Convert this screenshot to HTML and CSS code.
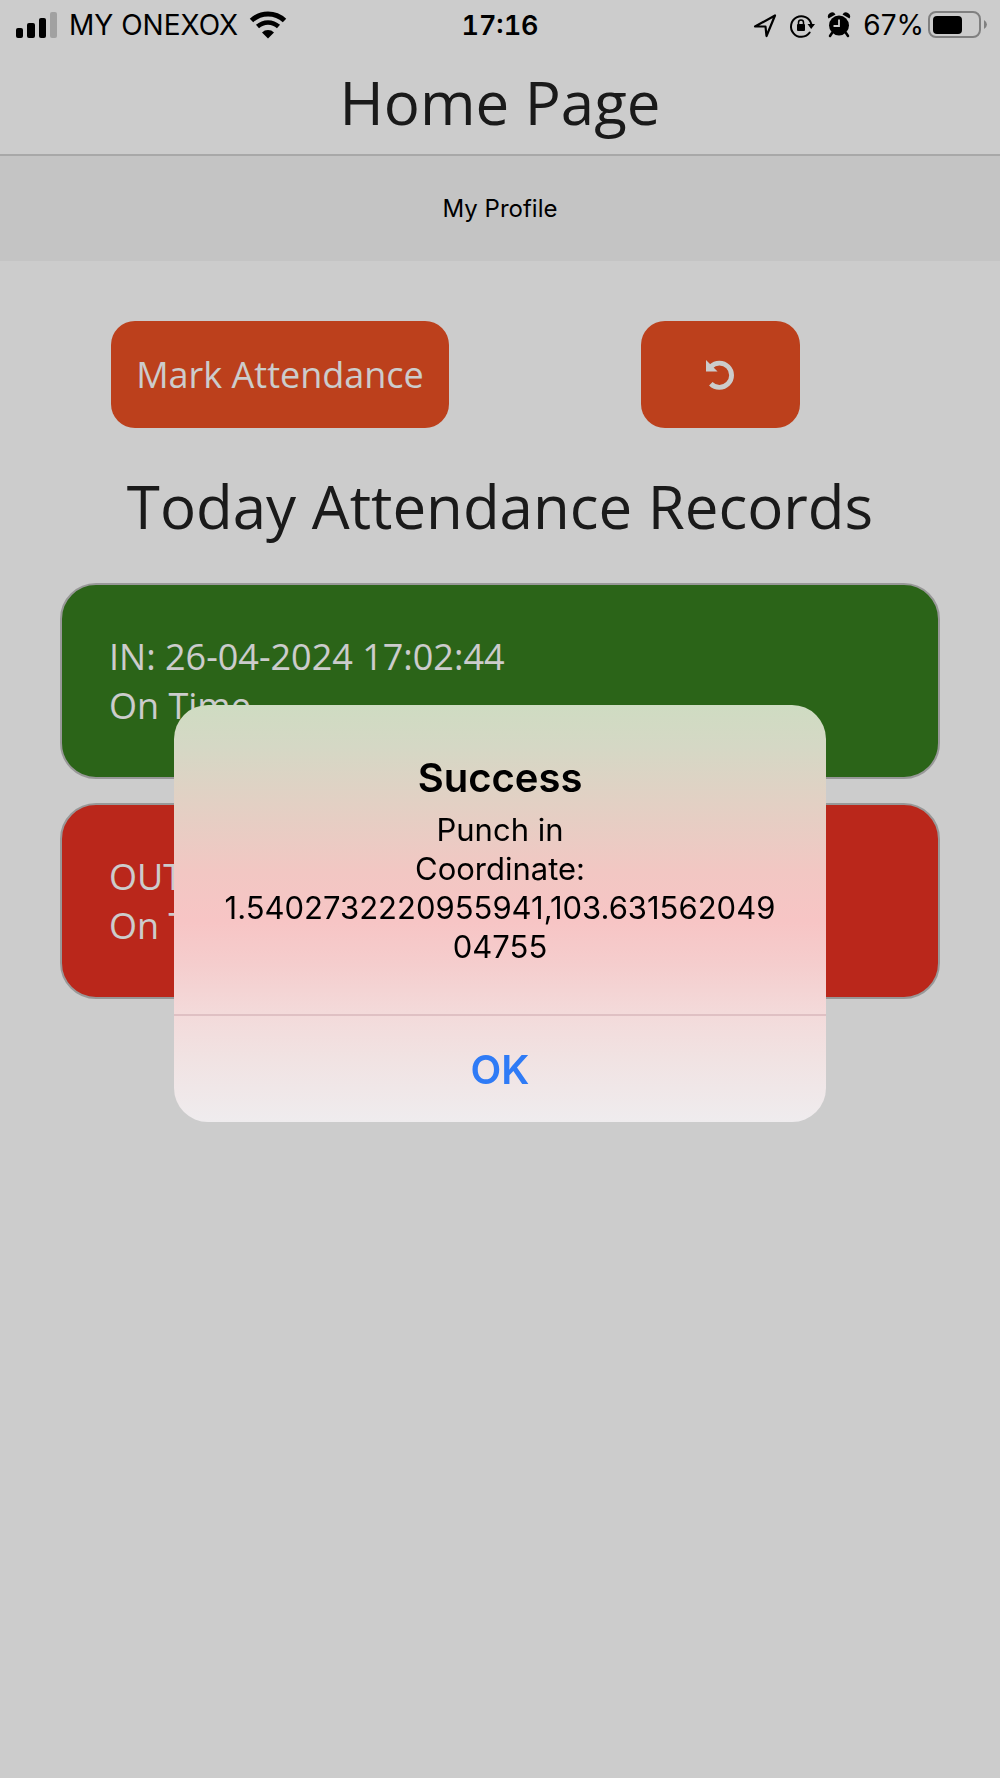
FILE: index.html
```
<!DOCTYPE html>
<html lang="en">

<head>
    <meta charset="UTF-8">
    <meta name="viewport" content="width=device-width, initial-scale=1.0">
    <title>Home Page</title>
    <link rel="stylesheet" href="styles.css">
</head>

<body>
    <div class="status-bar">
        <div class="status-left">
            <svg width="46" height="28" viewBox="-4 0 46 28">
                <rect x="0" y="17" width="7" height="10" rx="2" />
                <rect x="11" y="12" width="8" height="15" rx="2" />
                <rect x="23" y="7" width="7" height="20" rx="2" />
                <rect x="34" y="1" width="7" height="26" rx="2" fill="#cacaca" />
            </svg>
            <span class="carrier">MY ONEXOX</span>
            <svg width="38" height="28" viewBox="0 0 38 28">
                <path d="M2.5 9.5 A24 24 0 0 1 35.500 9.500" fill="none" stroke="#000" stroke-width="5" />
                <path d="M8.500 15.500 A15.500 15.500 0 0 1 29.500 15.500" fill="none" stroke="#000" stroke-width="4.500" />
                <path d="M13 21.500 A8.500 8.500 0 0 1 25 21.500 L19 27.500 Z" />
            </svg>
        </div>
        <span class="clock">17:16</span>
        <div class="status-right">
            <svg width="24" height="28" viewBox="0 0 24 28">
                <path d="M2 15.500 L22 4.500 L13.500 25 L12.500 15.500 Z" fill="none" stroke="#000" stroke-width="2.200" stroke-linejoin="round" />
            </svg>
            <svg width="26" height="28" viewBox="0 0 26 28">
                <path d="M20.700 21.500 A10.300 10.300 0 1 1 22.300 13" fill="none" stroke="#000" stroke-width="2" stroke-linecap="round" />
                <path d="M18.500 13 H26 L22.200 18 Z" />
                <rect x="8" y="13" width="8" height="7" rx="1" />
                <path d="M9.500 13.500 V11.500 A2.500 2.500 0 0 1 14.500 11.500 V13.500" fill="none" stroke="#000" stroke-width="1.500" />
            </svg>
            <svg width="24" height="28" viewBox="0 0 24 28">
                <circle cx="12" cy="14.500" r="10" />
                <path d="M1.500 7.500 A4 4 0 0 1 8.500 3.500 Z M22.500 7.500 A4 4 0 0 0 15.500 3.500 Z" />
                <path d="M5 22 L3 25 M19 22 L21 25" stroke="#000" stroke-width="2.500" stroke-linecap="round" />
                <path d="M12 8.500 V15 H6.500" fill="none" stroke="#fff" stroke-width="1.800" />
            </svg>
            <span class="percent">67%</span>
            <svg class="battery" width="60" height="28" viewBox="0 0 60 28">
                <rect x="1" y="1" width="51" height="25" rx="7" fill="none" stroke="#a0a0a0" stroke-width="2" />
                <rect x="5" y="5" width="29" height="18" rx="4" />
                <path d="M56 9 Q59 11 59 13.500 Q59 16 56 18 Z" fill="#a0a0a0" />
            </svg>
        </div>
    </div>

    <header>
        <h1>Home Page</h1>
    </header>
    <nav>
        <a href="#profile">My Profile</a>
    </nav>

    <main>
        <div class="actions">
            <button type="button" class="btn">Mark Attendance</button>
            <button type="button" class="btn btn-refresh" aria-label="Refresh">
                <svg width="31" height="31" viewBox="0 0 32 32">
                    <path d="M6 25.500 A12.500 12.500 0 1 0 6 8" fill="none" stroke="#fff" stroke-width="5" />
                    <path d="M1 1 V13 H13 Z" fill="#fff" />
                </svg>
            </button>
        </div>

        <h2>Today Attendance Records</h2>

        <div class="record record-in">
            <p>IN: 26-04-2024 17:02:44</p>
            <p>On Time</p>
        </div>
        <div class="record record-out">
            <p>OUT:</p>
            <p>On Time</p>
        </div>
    </main>

    <div class="overlay">
        <div class="alert" role="alertdialog" aria-labelledby="alert-title" aria-describedby="alert-text">
            <div class="alert-body">
                <h3 id="alert-title">Success</h3>
                <p id="alert-text">Punch in<br>Coordinate: 1.5402732220955941,103.63156204904755</p>
            </div>
            <button type="button" class="alert-ok">OK</button>
        </div>
    </div>
</body>

</html>
```

FILE: styles.css
```
* {
    box-sizing: border-box;
}

body {
    margin: 0;
    min-height: 100vh;
    background-color: #fff;
    color: #212121;
    font-family: "Open Sans", sans-serif;
}

h1, h2, h3, p {
    margin: 0;
    font-weight: 400;
}

svg {
    display: block;
    flex-shrink: 0;
}

.status-bar {
    display: grid;
    grid-template-columns: 1fr auto 1fr;
    align-items: center;
    height: 50px;
    padding: 0 12px;
    color: #000;
    font-family: Inter, sans-serif;
    font-size: 28px;
}

.status-left,
.status-right {
    display: flex;
    align-items: center;
    gap: 12px;
}

.status-left {
    gap: 11px;
}

.status-right {
    justify-content: flex-end;
}

.clock {
    font-size: 27px;
    font-weight: 600;
    font-variant-numeric: tabular-nums;
}

.percent {
    margin-right: -8px;
}

header {
    padding: 12px 0;
    border-bottom: 2px solid #d2d2d2;
    text-align: center;
}

h1, h2 {
    font-size: 60px;
    line-height: 80px;
}

nav {
    display: flex;
    align-items: center;
    justify-content: center;
    height: 105px;
    background-color: #f6f6f6;
}

nav a {
    color: #000;
    font-family: Inter, sans-serif;
    font-size: 24px;
    text-decoration: none;
}

main {
    padding: 60px;
}

.actions {
    display: grid;
    grid-template-columns: 1fr 1fr;
    justify-items: center;
    margin-bottom: 38px;
}

.btn {
    display: flex;
    align-items: center;
    justify-content: center;
    height: 107px;
    padding: 0 25px;
    border: none;
    border-radius: 24px;
    background-color: #eb5123;
    color: #fff;
    font-family: inherit;
    font-size: 36px;
    cursor: pointer;
}

.btn-refresh {
    padding: 0 64px;
}

h2 {
    margin-bottom: 37px;
    text-align: center;
}

.record {
    margin-bottom: 24px;
    padding: 47px;
    border: 2px solid #bfbfbf;
    border-radius: 36px;
    color: #fff;
    font-size: 36px;
    line-height: 49px;
}

.record-in {
    background-color: #367d1f;
}

.record-out {
    background-color: #e93122;
}

.overlay {
    position: fixed;
    inset: 0;
    display: flex;
    align-items: center;
    justify-content: center;
    padding-top: 49px;
    background-color: rgba(0, 0, 0, 0.2);
}

.alert {
    width: 652px;
    max-width: 90%;
    overflow: hidden;
    border-radius: 34px;
    background: linear-gradient(#cfdcc2, #d5d8c5 10%, #e3d0c4 24%, #f2c7c3 40%, #f7c5c5 52%, #f5cdcd 62%, #f3dada 74%, #f1e2e2 84%, #efecee);
    color: #000;
    font-family: Inter, sans-serif;
    text-align: center;
}

.alert-body {
    padding: 48px 44px;
    border-bottom: 2px solid #dfc0c3;
}

.alert-body h3 {
    font-size: 40px;
    font-weight: 600;
    line-height: 50px;
}

.alert-body p {
    margin-top: 7px;
    font-size: 31px;
    line-height: 39px;
    overflow-wrap: break-word;
}

.alert-ok {
    display: block;
    width: 100%;
    height: 106px;
    border: none;
    background: none;
    color: #2f7bf6;
    font-family: inherit;
    font-size: 40px;
    font-weight: 600;
    cursor: pointer;
}
```
